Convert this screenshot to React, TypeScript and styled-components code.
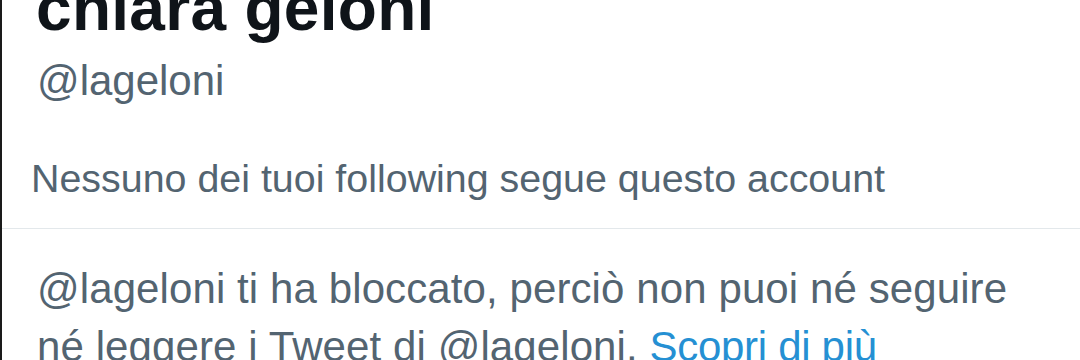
import React from "react";
import styled, { createGlobalStyle } from "styled-components";

const Global = createGlobalStyle`
  html, body {
    margin: 0;
    padding: 0;
    background: #ffffff;
    overflow: hidden;
  }
  body {
    font-family: "Liberation Sans", Arial, sans-serif;
  }
`;

const Page = styled.div`
  width: 1080px;
  height: 360px;
  box-sizing: border-box;
  border-left: 2px solid #1a1a1a;
  overflow: hidden;
  display: flex;
  flex-direction: column;
`;

const Header = styled.section`
  display: flex;
  flex-direction: column;
  padding-bottom: 24px;
  border-bottom: 1px solid #e3e8eb;
`;

const Name = styled.h1`
  margin: -24px 0 0 34px;
  font-size: 64px;
  line-height: 64px;
  font-weight: 700;
  color: #0f1419;
  letter-spacing: 0.3px;
`;

const Handle = styled.div`
  margin: 13px 0 0 35px;
  font-size: 42px;
  line-height: 56px;
  color: #536471;
`;

const Mutuals = styled.div`
  margin: 43px 0 0 29px;
  font-size: 39.4px;
  line-height: 52px;
  color: #536471;
`;

const Notice = styled.p`
  margin: 0;
  padding: 31px 0 0 35px;
  width: 1000px;
  font-size: 42px;
  line-height: 58px;
  color: #536471;
  letter-spacing: 0.1px;
`;

const Link = styled.a`
  color: #2590d3;
  text-decoration: none;
  letter-spacing: -0.3px;
`;

export default function App() {
  return (
    <>
      <Global />
      <Page>
        <Header>
          <Name>chiara geloni</Name>
          <Handle>@lageloni</Handle>
          <Mutuals>Nessuno dei tuoi following segue questo account</Mutuals>
        </Header>
        <Notice>
          @lageloni ti ha bloccato, perciò non puoi né seguire né leggere i
          Tweet di @lageloni. <Link href="#">Scopri di più</Link>
        </Notice>
      </Page>
    </>
  );
}
